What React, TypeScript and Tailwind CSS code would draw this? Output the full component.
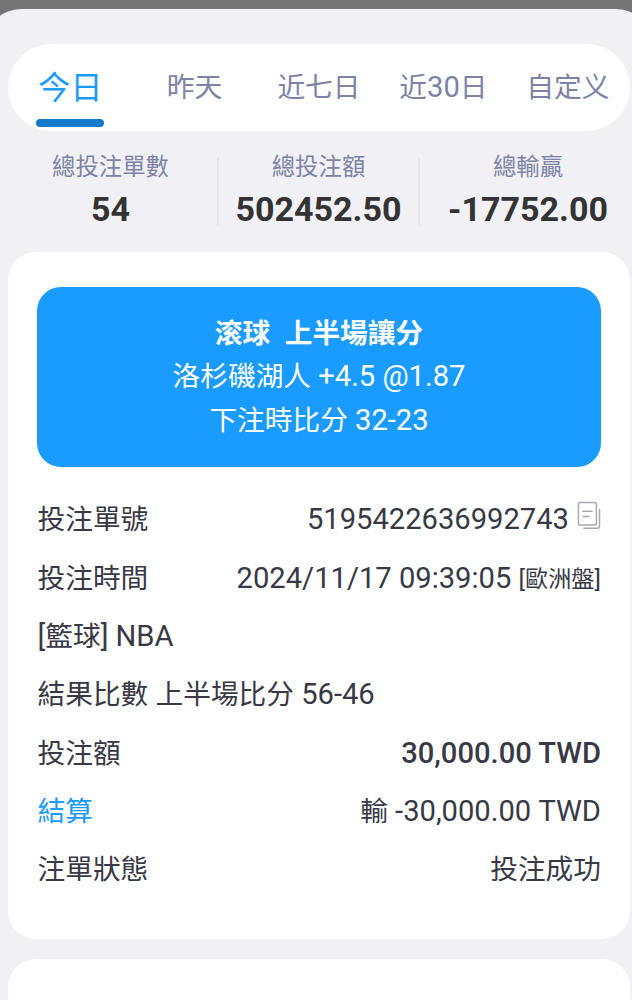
import type { ReactNode } from "react";
import clsx from "clsx";

const tabs = ["今日", "昨天", "近七日", "近30日", "自定义"];

const totals = [
  { label: "總投注單數", value: "54" },
  { label: "總投注額", value: "502452.50" },
  { label: "總輸贏", value: "-17752.00" },
];

// Han characters are set slightly smaller than the digits beside them
function Mixed({ children }: { children: string }) {
  return (
    <>
      {children.split(/([\u4e00-\u9fff]+)/).map((part, i) =>
        i % 2 ? (
          <span key={i} className="text-[0.95em]">
            {part}
          </span>
        ) : (
          part
        )
      )}
    </>
  );
}

function CopyIcon() {
  return (
    <svg
      viewBox="0 0 24 30"
      fill="none"
      stroke="#a9aab0"
      strokeWidth="1.5"
      strokeLinecap="round"
      className="mb-[9px] ml-2 h-[30px] w-6 shrink-0"
    >
      <rect x="1.4" y="1.4" width="18" height="22.6" rx="1.8" />
      <path d="M6 10.3h9M6 15.5h6" />
      <path d="M22.5 8.5V25a2.3 2.3 0 0 1-2.3 2.3H7" />
    </svg>
  );
}

function Row({ label, children }: { label: ReactNode; children?: ReactNode }) {
  return (
    <div className="flex h-[58.35px] items-center justify-between whitespace-pre">
      <div className="pl-[0.5px]">{label}</div>
      <div className="flex items-center">{children}</div>
    </div>
  );
}

export default function App() {
  return (
    <div className='h-[1000px] w-[632px] overflow-hidden bg-[#757575] pt-[9px] font-["Roboto","Noto_Sans_CJK_SC",sans-serif]'>
      <div className="-ml-[15px] h-full w-[667px] rounded-t-[36px] bg-[#f0f0f5] pt-[35px] pr-[22px] pl-[23px]">
        <div className="grid h-[87px] grid-cols-5 rounded-full bg-white">
          {tabs.map((tab, i) => (
            <button
              key={tab}
              className={clsx(
                "flex flex-col items-center whitespace-nowrap",
                i === 0
                  ? "text-[34px] text-[#1a9bff]"
                  : "text-[29.2px] text-[#7d83a6]"
              )}
            >
              <span className="flex h-[75px] items-center pt-3">
                <span>
                  <Mixed>{tab}</Mixed>
                </span>
              </span>
              {i === 0 && (
                <span className="h-2 w-[68px] shrink-0 rounded-full bg-[#147bcc]" />
              )}
            </button>
          ))}
        </div>

        <div className="mt-[27px] -mr-[7px] -ml-[4px] grid h-[67px] grid-cols-[215px_201px_216px] grid-rows-[67px] divide-x-2 divide-[#e5e5eb]">
          {totals.map((total) => (
            <div key={total.label} className="flex flex-col items-center">
              <div className="-mt-0.5 h-[22px] text-[23.4px] leading-[22px] text-[#7d83a6]">
                {total.label}
              </div>
              <div className="mt-[11px] text-[34px] leading-10 font-bold text-[#333]">
                {total.value}
              </div>
            </div>
          ))}
        </div>

        <div className="mt-[27px] h-[687px] rounded-[28px] bg-white px-[29px] pt-[35px] text-[29.15px] text-[#383945]">
          <div className="mb-6 h-[180px] rounded-3xl bg-[#199bff] pt-[24.5px] text-center leading-[43.6px] whitespace-pre text-white">
            <div className="font-bold">
              <Mixed>{"滚球  上半場讓分"}</Mixed>
            </div>
            <div>
              <Mixed>洛杉磯湖人 +4.5 @1.87</Mixed>
            </div>
            <div>
              <Mixed>下注時比分 32-23</Mixed>
            </div>
          </div>

          <Row label={<Mixed>投注單號</Mixed>}>
            5195422636992743
            <CopyIcon />
          </Row>
          <Row label={<Mixed>投注時間</Mixed>}>
            2024/11/17 09:39:05{" "}
            <span className="pt-0.5 text-[24.4px]">
              <Mixed>[歐洲盤]</Mixed>
            </span>
          </Row>
          <Row label={<Mixed>[籃球] NBA</Mixed>} />
          <Row label={<Mixed>結果比數 上半場比分 56-46</Mixed>} />
          <Row label={<Mixed>投注額</Mixed>}>
            <span className="font-medium">30,000.00 TWD</span>
          </Row>
          <Row
            label={
              <span className="text-[#1a9bff]">
                <Mixed>結算</Mixed>
              </span>
            }
          >
            <span>
              <Mixed>輸 -30,000.00 TWD</Mixed>
            </span>
          </Row>
          <Row label={<Mixed>注單狀態</Mixed>}>
            <Mixed>投注成功</Mixed>
          </Row>
        </div>

        <div className="mt-5 h-24 rounded-[28px] bg-white" />
      </div>
    </div>
  );
}
